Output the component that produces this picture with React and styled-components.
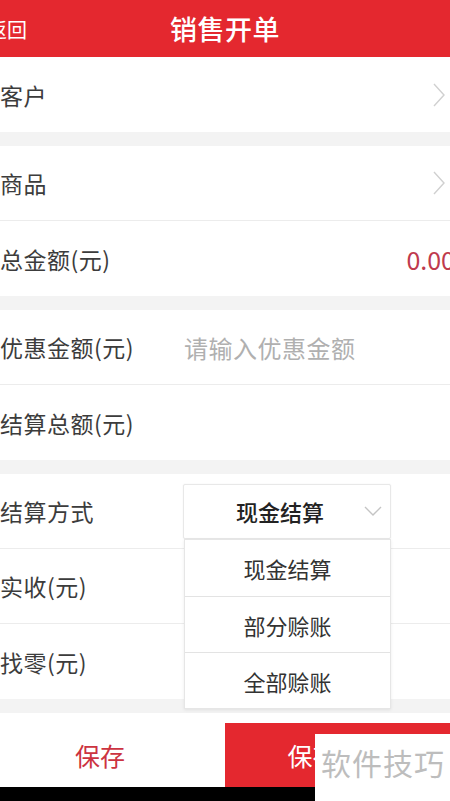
import React from "react";
import styled, { createGlobalStyle } from "styled-components";

const GlobalStyle = createGlobalStyle`
  html, body {
    margin: 0;
    padding: 0;
    background: #f3f3f3;
  }
  body {
    font-family: "Noto Sans CJK SC", "Noto Sans", sans-serif;
  }
`;

const Page = styled.div`
  width: 450px;
  height: 801px;
  overflow: hidden;
  position: relative;
  display: flex;
  flex-direction: column;
  background: #f3f3f3;
`;

const Header = styled.div`
  height: 57px;
  flex-shrink: 0;
  background: #e4282f;
  display: flex;
  align-items: center;
  justify-content: center;
  position: relative;
  color: #fff;
`;

const Back = styled.span`
  position: absolute;
  left: -13px;
  top: 50%;
  transform: translateY(-50%);
  font-size: 20px;
`;

const Title = styled.h1`
  margin: 0;
  font-size: 27px;
  font-weight: 500;
  letter-spacing: 0.5px;
`;

const Group = styled.div`
  background: #fff;
  margin-top: ${(p) => (p.first ? 0 : 14)}px;
  display: flex;
  flex-direction: column;
`;

const Row = styled.div`
  height: 75px;
  box-sizing: border-box;
  display: flex;
  align-items: center;
  position: relative;
  border-bottom: ${(p) => (p.last ? "none" : "1px solid #ececec")};
`;

const Label = styled.span`
  width: 184px;
  flex-shrink: 0;
  font-size: 23px;
  letter-spacing: 0.5px;
  color: #3c3c3c;
`;

const Placeholder = styled.span`
  font-size: 24px;
  color: #b0b0b0;
  letter-spacing: 0.5px;
`;

const Value = styled.span`
  margin-left: auto;
  margin-right: -5px;
  font-size: 25px;
  color: #bf3a4d;
`;

const Arrow = styled.svg`
  margin-left: auto;
  margin-right: 4px;
`;

const Select = styled.div`
  position: relative;
  width: 208px;
  height: 55px;
  margin-left: -1px;
  padding-right: 14px;
  box-sizing: border-box;
  border: 1px solid #e8e8e8;
  border-radius: 2px;
  box-shadow: 0 0 2px rgba(0, 0, 0, 0.06);
  display: flex;
  align-items: center;
  justify-content: center;
  font-size: 22px;
  font-weight: 500;
  color: #222;
  background: #fff;
`;

const SelectArrow = styled.svg`
  position: absolute;
  right: 8px;
  top: 50%;
  transform: translateY(-50%);
`;

const Menu = styled.ul`
  position: absolute;
  left: 184px;
  top: 65px;
  width: 207px;
  margin: 0;
  padding: 0;
  list-style: none;
  background: #fff;
  border: 1px solid #e6e6e6;
  box-sizing: border-box;
  box-shadow: 0 1px 3px rgba(0, 0, 0, 0.08);
  z-index: 2;
`;

const Option = styled.li`
  height: 56px;
  display: flex;
  align-items: center;
  justify-content: center;
  font-size: 22px;
  color: #333;
  border-top: ${(p) => (p.first ? "none" : "1px solid #e3e3e3")};
  box-sizing: border-box;
`;

const Footer = styled.div`
  margin-top: 14px;
  height: 74px;
  flex-shrink: 0;
  background: #fff;
  padding-top: 10px;
  box-sizing: border-box;
  display: flex;
`;

const FooterButton = styled.div`
  width: 50%;
  box-sizing: border-box;
  display: flex;
  align-items: center;
  justify-content: center;
  font-size: 25px;
  padding-right: ${(p) => (p.primary ? 0 : 25)}px;
  background: ${(p) => (p.primary ? "#e4282f" : "#fff")};
  color: ${(p) => (p.primary ? "#fff" : "#cc3341")};
`;

const NavStrip = styled.div`
  flex: 1;
  background: #000;
`;

const Watermark = styled.div`
  position: absolute;
  left: 315px;
  top: 734px;
  width: 135px;
  height: 67px;
  background: #fff;
  display: flex;
  align-items: flex-start;
  padding: 9px 0 0 6px;
  box-sizing: border-box;
  font-size: 30px;
  line-height: 1.3;
  color: #bdbdbd;
  letter-spacing: 1px;
  z-index: 3;
`;

const Chevron = () => (
  <Arrow width="14" height="26" viewBox="0 0 14 26">
    <polyline points="2,2 12,13 2,24" fill="none" stroke="#d0d0d0" strokeWidth="1.4" />
  </Arrow>
);

function App() {
  return (
    <Page>
      <GlobalStyle />
      <Header>
        <Back>返回</Back>
        <Title>销售开单</Title>
      </Header>
      <Group first>
        <Row last>
          <Label>客户</Label>
          <Chevron />
        </Row>
      </Group>
      <Group>
        <Row>
          <Label>商品</Label>
          <Chevron />
        </Row>
        <Row last>
          <Label>总金额(元)</Label>
          <Value>0.00</Value>
        </Row>
      </Group>
      <Group>
        <Row>
          <Label>优惠金额(元)</Label>
          <Placeholder>请输入优惠金额</Placeholder>
        </Row>
        <Row last>
          <Label>结算总额(元)</Label>
        </Row>
      </Group>
      <Group>
        <Row>
          <Label>结算方式</Label>
          <Select>
            现金结算
            <SelectArrow width="18" height="12" viewBox="0 0 18 12">
              <polyline points="1,2 9,10 17,2" fill="none" stroke="#c4c4c4" strokeWidth="1.4" />
            </SelectArrow>
          </Select>
          <Menu>
            <Option first>现金结算</Option>
            <Option>部分赊账</Option>
            <Option>全部赊账</Option>
          </Menu>
        </Row>
        <Row>
          <Label>实收(元)</Label>
        </Row>
        <Row last>
          <Label>找零(元)</Label>
        </Row>
      </Group>
      <Footer>
        <FooterButton>保存</FooterButton>
        <FooterButton primary>保存打印</FooterButton>
      </Footer>
      <NavStrip />
      <Watermark>软件技巧</Watermark>
    </Page>
  );
}

export default App;
